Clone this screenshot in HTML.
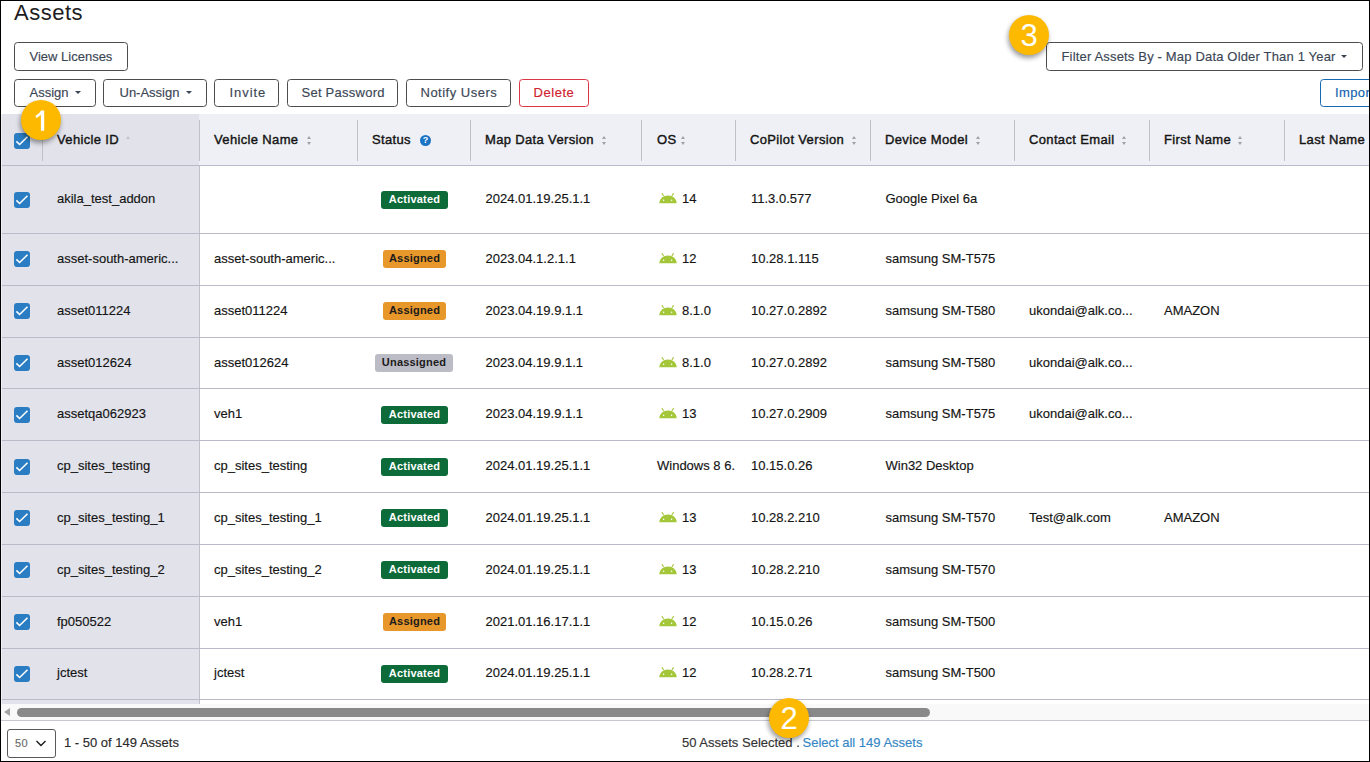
<!DOCTYPE html>
<html><head><meta charset="utf-8"><title>Assets</title><style>
*{margin:0;padding:0;box-sizing:border-box}
html,body{width:1370px;height:762px;overflow:hidden;background:#fff}
body{position:relative;font-family:"Liberation Sans", sans-serif}
.t{position:absolute;white-space:nowrap;-webkit-text-stroke:0.15px currentColor}
.btn{position:absolute;border:1px solid #4d4d4d;border-radius:3.5px;background:#fff}
.caret{position:absolute;width:0;height:0;border-left:3px solid transparent;border-right:3px solid transparent;border-top:3px solid #3b4655}
.hdr{position:absolute}
.hl{position:absolute;height:1px;background:#babac8}
.vs{position:absolute;width:1px;background:#c0c0c8}
.tri-up{position:absolute;width:0;height:0;border-left:2.5px solid transparent;border-right:2.5px solid transparent;border-bottom:3px solid #a0a0a8}
.tri-dn{position:absolute;width:0;height:0;border-left:2.5px solid transparent;border-right:2.5px solid transparent;border-top:3px solid #a0a0a8}
.help{position:absolute;width:11px;height:11px;border-radius:50%;background:#1a73c4;color:#fff;font-size:9px;line-height:11px;text-align:center;font-weight:bold}
.cb{position:absolute;width:16px;height:16px;border-radius:3px;background:#2a7dc3}
.cb svg{display:block}
.badge{position:absolute;height:18px;border-radius:3px;font-size:11px;font-weight:bold;line-height:17px;text-align:center;letter-spacing:0.2px}
.and{position:absolute}
.circ{position:absolute;width:40px;height:40px;border-radius:50%;background:#fcb900;color:#fff;font-size:31px;line-height:41px;text-align:center;box-shadow:-1px 3px 5px rgba(0,0,0,0.4)}
.frame{position:absolute;left:0;top:0;width:1370px;height:762px;border:1px solid #000;pointer-events:none}
</style></head>
<body>
<div class="t" style="left:14px;top:1.68px;font-size:22px;line-height:22px;font-weight:normal;color:#1d1d1f;letter-spacing:0.5px;-webkit-text-stroke:0">Assets</div>
<div class="btn" style="left:14px;top:42px;width:114px;height:29px;border-color:#4d4d4d;"></div><div class="t" style="left:29.5px;top:49.50px;font-size:13px;line-height:13px;font-weight:normal;color:#3b4655;letter-spacing:0px">View Licenses</div>
<div class="btn" style="left:14px;top:79px;width:82px;height:28px;border-color:#4d4d4d;"></div><div class="t" style="left:29.5px;top:86.00px;font-size:13px;line-height:13px;font-weight:normal;color:#3b4655;letter-spacing:0px">Assign</div>
<div class="caret" style="left:75px;top:91px;"></div>
<div class="btn" style="left:103px;top:79px;width:104px;height:28px;border-color:#4d4d4d;"></div><div class="t" style="left:119.5px;top:86.00px;font-size:13px;line-height:13px;font-weight:normal;color:#3b4655;letter-spacing:0px">Un-Assign</div>
<div class="caret" style="left:186px;top:91px;"></div>
<div class="btn" style="left:214px;top:79px;width:65px;height:28px;border-color:#4d4d4d;"></div><div class="t" style="left:229.5px;top:86.00px;font-size:13px;line-height:13px;font-weight:normal;color:#3b4655;letter-spacing:0.95px">Invite</div>
<div class="btn" style="left:287px;top:79px;width:111px;height:28px;border-color:#4d4d4d;"></div><div class="t" style="left:301.5px;top:86.00px;font-size:13px;line-height:13px;font-weight:normal;color:#3b4655;letter-spacing:0.25px">Set Password</div>
<div class="btn" style="left:406px;top:79px;width:105px;height:28px;border-color:#4d4d4d;"></div><div class="t" style="left:420.5px;top:86.00px;font-size:13px;line-height:13px;font-weight:normal;color:#3b4655;letter-spacing:0.5px">Notify Users</div>
<div class="btn" style="left:519px;top:79px;width:70px;height:28px;border-color:#dc3545;"></div><div class="t" style="left:533.5px;top:86.00px;font-size:13px;line-height:13px;font-weight:normal;color:#d0202e;letter-spacing:0.55px">Delete</div>
<div class="btn" style="left:1320px;top:79px;width:80px;height:28px;border-color:#1569b3;"></div><div class="t" style="left:1335px;top:86.00px;font-size:13px;line-height:13px;font-weight:normal;color:#0f62ad;letter-spacing:0.4px">Import</div>
<div class="btn" style="left:1046px;top:42px;width:317px;height:29px;border-color:#4d4d4d;"></div><div class="t" style="left:1061.5px;top:49.50px;font-size:13px;line-height:13px;font-weight:normal;color:#3b4655;letter-spacing:0.17px">Filter Assets By - Map Data Older Than 1 Year</div>
<div class="caret" style="left:1341px;top:55px;"></div>
<div class="hdr" style="left:1px;top:114px;width:1368px;height:51px;background:#eff0f5"></div>
<div class="hdr" style="left:1px;top:114px;width:198px;height:51px;background:#e1e2ea"></div>
<div class="hl" style="left:1px;top:165px;width:1368px;"></div>
<div class="vs" style="left:42px;top:120px;height:41px;"></div>
<div class="vs" style="left:199px;top:120px;height:41px;"></div>
<div class="vs" style="left:357px;top:120px;height:41px;"></div>
<div class="vs" style="left:470px;top:120px;height:41px;"></div>
<div class="vs" style="left:641px;top:120px;height:41px;"></div>
<div class="vs" style="left:735px;top:120px;height:41px;"></div>
<div class="vs" style="left:870px;top:120px;height:41px;"></div>
<div class="vs" style="left:1014px;top:120px;height:41px;"></div>
<div class="vs" style="left:1149px;top:120px;height:41px;"></div>
<div class="vs" style="left:1284px;top:120px;height:41px;"></div>
<div class="t" style="left:57px;top:132.60px;font-size:13px;line-height:13px;font-weight:normal;color:#141414;-webkit-text-stroke:0.4px #141414;letter-spacing:0.35px">Vehicle ID</div>
<div class="t" style="left:214px;top:132.60px;font-size:13px;line-height:13px;font-weight:normal;color:#141414;-webkit-text-stroke:0.4px #141414;letter-spacing:0.35px">Vehicle Name</div>
<div class="t" style="left:372px;top:132.60px;font-size:13px;line-height:13px;font-weight:normal;color:#141414;-webkit-text-stroke:0.4px #141414;letter-spacing:0.35px">Status</div>
<div class="t" style="left:485px;top:132.60px;font-size:13px;line-height:13px;font-weight:normal;color:#141414;-webkit-text-stroke:0.4px #141414;letter-spacing:0.35px">Map Data Version</div>
<div class="t" style="left:657px;top:132.60px;font-size:13px;line-height:13px;font-weight:normal;color:#141414;-webkit-text-stroke:0.4px #141414;letter-spacing:0.35px">OS</div>
<div class="t" style="left:750px;top:132.60px;font-size:13px;line-height:13px;font-weight:normal;color:#141414;-webkit-text-stroke:0.4px #141414;letter-spacing:0.35px">CoPilot Version</div>
<div class="t" style="left:885px;top:132.60px;font-size:13px;line-height:13px;font-weight:normal;color:#141414;-webkit-text-stroke:0.4px #141414;letter-spacing:0.35px">Device Model</div>
<div class="t" style="left:1029px;top:132.60px;font-size:13px;line-height:13px;font-weight:normal;color:#141414;-webkit-text-stroke:0.4px #141414;letter-spacing:0.35px">Contact Email</div>
<div class="t" style="left:1164px;top:132.60px;font-size:13px;line-height:13px;font-weight:normal;color:#141414;-webkit-text-stroke:0.4px #141414;letter-spacing:0.35px">First Name</div>
<div class="t" style="left:1299px;top:132.60px;font-size:13px;line-height:13px;font-weight:normal;color:#141414;-webkit-text-stroke:0.4px #141414;letter-spacing:0.35px">Last Name</div>
<div class="tri-up" style="border-bottom-color:#c4c4cc;left:125.5px;top:136px;"></div>
<div class="tri-up" style="left:306.5px;top:136px;"></div><div class="tri-dn" style="left:306.5px;top:142px;"></div>
<div class="tri-up" style="left:602.0px;top:136px;"></div><div class="tri-dn" style="left:602.0px;top:142px;"></div>
<div class="tri-up" style="left:680.5px;top:136px;"></div><div class="tri-dn" style="left:680.5px;top:142px;"></div>
<div class="tri-up" style="left:851.5px;top:136px;"></div><div class="tri-dn" style="left:851.5px;top:142px;"></div>
<div class="tri-up" style="left:975.5px;top:136px;"></div><div class="tri-dn" style="left:975.5px;top:142px;"></div>
<div class="tri-up" style="left:1121.5px;top:136px;"></div><div class="tri-dn" style="left:1121.5px;top:142px;"></div>
<div class="tri-up" style="left:1237.5px;top:136px;"></div><div class="tri-dn" style="left:1237.5px;top:142px;"></div>
<div class="help" style="left:420px;top:135px;">?</div>
<div class="cb" style="left:14px;top:133px;"><svg width="16" height="16" viewBox="0 0 16 16"><path d="M2.4 8.4 L5.6 11.5 L13.5 3.8" fill="none" stroke="#fff" stroke-width="1.6"/></svg></div>
<div style="position:absolute;left:1px;top:166px;width:198px;height:538px;background:#e1e2ea"></div>
<div class="vs" style="left:199px;top:166px;height:538px;"></div>
<div class="hl" style="left:1px;top:233px;width:1368px;"></div>
<div class="hl" style="left:1px;top:285px;width:1368px;"></div>
<div class="hl" style="left:1px;top:337px;width:1368px;"></div>
<div class="hl" style="left:1px;top:388px;width:1368px;"></div>
<div class="hl" style="left:1px;top:440px;width:1368px;"></div>
<div class="hl" style="left:1px;top:492px;width:1368px;"></div>
<div class="hl" style="left:1px;top:544px;width:1368px;"></div>
<div class="hl" style="left:1px;top:596px;width:1368px;"></div>
<div class="hl" style="left:1px;top:648px;width:1368px;"></div>
<div class="hl" style="left:1px;top:699px;width:1368px;"></div>
<div class="cb" style="left:14px;top:192px;"><svg width="16" height="16" viewBox="0 0 16 16"><path d="M2.4 8.4 L5.6 11.5 L13.5 3.8" fill="none" stroke="#fff" stroke-width="1.6"/></svg></div>
<div class="t" style="left:57px;top:192.00px;font-size:13px;line-height:13px;font-weight:normal;color:#141414;">akila_test_addon</div>
<div class="badge" style="left:381px;top:191px;width:67px;background:#0d6b3a;color:#ffffff">Activated</div>
<div class="t" style="left:485.5px;top:192.00px;font-size:13px;line-height:13px;font-weight:normal;color:#141414;">2024.01.19.25.1.1</div>
<svg class="and" width="19" height="11" viewBox="0 0 19 11" style="left:659px;top:192.5px"><path d="M0.3 10.3 C0.6 5.4 4.4 2.5 9 2.5 C13.6 2.5 17.4 5.4 17.7 10.3 Z" fill="#a4c639"/><path d="M2.9 0.2 L4.6 3 M14.6 0.2 L12.9 3" stroke="#a4c639" stroke-width="1.1"/><circle cx="4.6" cy="7.3" r="0.75" fill="#fff"/><circle cx="12.6" cy="7.3" r="0.75" fill="#fff"/></svg>
<div class="t" style="left:682px;top:192.00px;font-size:13px;line-height:13px;font-weight:normal;color:#141414;">14</div>
<div class="t" style="left:751px;top:192.00px;font-size:13px;line-height:13px;font-weight:normal;color:#141414;">11.3.0.577</div>
<div class="t" style="left:885.5px;top:192.00px;font-size:13px;line-height:13px;font-weight:normal;color:#141414;">Google Pixel 6a</div>
<div class="cb" style="left:14px;top:251px;"><svg width="16" height="16" viewBox="0 0 16 16"><path d="M2.4 8.4 L5.6 11.5 L13.5 3.8" fill="none" stroke="#fff" stroke-width="1.6"/></svg></div>
<div class="t" style="left:57px;top:252.00px;font-size:13px;line-height:13px;font-weight:normal;color:#141414;">asset-south-americ...</div>
<div class="t" style="left:214px;top:252.00px;font-size:13px;line-height:13px;font-weight:normal;color:#141414;">asset-south-americ...</div>
<div class="badge" style="left:383px;top:250px;width:63px;background:#e8972a;color:#1b1b1b">Assigned</div>
<div class="t" style="left:485.5px;top:252.00px;font-size:13px;line-height:13px;font-weight:normal;color:#141414;">2023.04.1.2.1.1</div>
<svg class="and" width="19" height="11" viewBox="0 0 19 11" style="left:659px;top:252.5px"><path d="M0.3 10.3 C0.6 5.4 4.4 2.5 9 2.5 C13.6 2.5 17.4 5.4 17.7 10.3 Z" fill="#a4c639"/><path d="M2.9 0.2 L4.6 3 M14.6 0.2 L12.9 3" stroke="#a4c639" stroke-width="1.1"/><circle cx="4.6" cy="7.3" r="0.75" fill="#fff"/><circle cx="12.6" cy="7.3" r="0.75" fill="#fff"/></svg>
<div class="t" style="left:682px;top:252.00px;font-size:13px;line-height:13px;font-weight:normal;color:#141414;">12</div>
<div class="t" style="left:751px;top:252.00px;font-size:13px;line-height:13px;font-weight:normal;color:#141414;">10.28.1.115</div>
<div class="t" style="left:885.5px;top:252.00px;font-size:13px;line-height:13px;font-weight:normal;color:#141414;">samsung SM-T575</div>
<div class="cb" style="left:14px;top:303px;"><svg width="16" height="16" viewBox="0 0 16 16"><path d="M2.4 8.4 L5.6 11.5 L13.5 3.8" fill="none" stroke="#fff" stroke-width="1.6"/></svg></div>
<div class="t" style="left:57px;top:304.00px;font-size:13px;line-height:13px;font-weight:normal;color:#141414;">asset011224</div>
<div class="t" style="left:214px;top:304.00px;font-size:13px;line-height:13px;font-weight:normal;color:#141414;">asset011224</div>
<div class="badge" style="left:383px;top:302px;width:63px;background:#e8972a;color:#1b1b1b">Assigned</div>
<div class="t" style="left:485.5px;top:304.00px;font-size:13px;line-height:13px;font-weight:normal;color:#141414;">2023.04.19.9.1.1</div>
<svg class="and" width="19" height="11" viewBox="0 0 19 11" style="left:659px;top:304.5px"><path d="M0.3 10.3 C0.6 5.4 4.4 2.5 9 2.5 C13.6 2.5 17.4 5.4 17.7 10.3 Z" fill="#a4c639"/><path d="M2.9 0.2 L4.6 3 M14.6 0.2 L12.9 3" stroke="#a4c639" stroke-width="1.1"/><circle cx="4.6" cy="7.3" r="0.75" fill="#fff"/><circle cx="12.6" cy="7.3" r="0.75" fill="#fff"/></svg>
<div class="t" style="left:682px;top:304.00px;font-size:13px;line-height:13px;font-weight:normal;color:#141414;">8.1.0</div>
<div class="t" style="left:751px;top:304.00px;font-size:13px;line-height:13px;font-weight:normal;color:#141414;">10.27.0.2892</div>
<div class="t" style="left:885.5px;top:304.00px;font-size:13px;line-height:13px;font-weight:normal;color:#141414;">samsung SM-T580</div>
<div class="t" style="left:1029px;top:304.00px;font-size:13px;line-height:13px;font-weight:normal;color:#141414;">ukondai@alk.co...</div>
<div class="t" style="left:1164px;top:304.00px;font-size:13px;line-height:13px;font-weight:normal;color:#141414;">AMAZON</div>
<div class="cb" style="left:14px;top:355px;"><svg width="16" height="16" viewBox="0 0 16 16"><path d="M2.4 8.4 L5.6 11.5 L13.5 3.8" fill="none" stroke="#fff" stroke-width="1.6"/></svg></div>
<div class="t" style="left:57px;top:356.00px;font-size:13px;line-height:13px;font-weight:normal;color:#141414;">asset012624</div>
<div class="t" style="left:214px;top:356.00px;font-size:13px;line-height:13px;font-weight:normal;color:#141414;">asset012624</div>
<div class="badge" style="left:375px;top:354px;width:78px;background:#bbbcc6;color:#1b1b1b">Unassigned</div>
<div class="t" style="left:485.5px;top:356.00px;font-size:13px;line-height:13px;font-weight:normal;color:#141414;">2023.04.19.9.1.1</div>
<svg class="and" width="19" height="11" viewBox="0 0 19 11" style="left:659px;top:356.5px"><path d="M0.3 10.3 C0.6 5.4 4.4 2.5 9 2.5 C13.6 2.5 17.4 5.4 17.7 10.3 Z" fill="#a4c639"/><path d="M2.9 0.2 L4.6 3 M14.6 0.2 L12.9 3" stroke="#a4c639" stroke-width="1.1"/><circle cx="4.6" cy="7.3" r="0.75" fill="#fff"/><circle cx="12.6" cy="7.3" r="0.75" fill="#fff"/></svg>
<div class="t" style="left:682px;top:356.00px;font-size:13px;line-height:13px;font-weight:normal;color:#141414;">8.1.0</div>
<div class="t" style="left:751px;top:356.00px;font-size:13px;line-height:13px;font-weight:normal;color:#141414;">10.27.0.2892</div>
<div class="t" style="left:885.5px;top:356.00px;font-size:13px;line-height:13px;font-weight:normal;color:#141414;">samsung SM-T580</div>
<div class="t" style="left:1029px;top:356.00px;font-size:13px;line-height:13px;font-weight:normal;color:#141414;">ukondai@alk.co...</div>
<div class="cb" style="left:14px;top:407px;"><svg width="16" height="16" viewBox="0 0 16 16"><path d="M2.4 8.4 L5.6 11.5 L13.5 3.8" fill="none" stroke="#fff" stroke-width="1.6"/></svg></div>
<div class="t" style="left:57px;top:407.00px;font-size:13px;line-height:13px;font-weight:normal;color:#141414;">assetqa062923</div>
<div class="t" style="left:214px;top:407.00px;font-size:13px;line-height:13px;font-weight:normal;color:#141414;">veh1</div>
<div class="badge" style="left:381px;top:406px;width:67px;background:#0d6b3a;color:#ffffff">Activated</div>
<div class="t" style="left:485.5px;top:407.00px;font-size:13px;line-height:13px;font-weight:normal;color:#141414;">2023.04.19.9.1.1</div>
<svg class="and" width="19" height="11" viewBox="0 0 19 11" style="left:659px;top:407.5px"><path d="M0.3 10.3 C0.6 5.4 4.4 2.5 9 2.5 C13.6 2.5 17.4 5.4 17.7 10.3 Z" fill="#a4c639"/><path d="M2.9 0.2 L4.6 3 M14.6 0.2 L12.9 3" stroke="#a4c639" stroke-width="1.1"/><circle cx="4.6" cy="7.3" r="0.75" fill="#fff"/><circle cx="12.6" cy="7.3" r="0.75" fill="#fff"/></svg>
<div class="t" style="left:682px;top:407.00px;font-size:13px;line-height:13px;font-weight:normal;color:#141414;">13</div>
<div class="t" style="left:751px;top:407.00px;font-size:13px;line-height:13px;font-weight:normal;color:#141414;">10.27.0.2909</div>
<div class="t" style="left:885.5px;top:407.00px;font-size:13px;line-height:13px;font-weight:normal;color:#141414;">samsung SM-T575</div>
<div class="t" style="left:1029px;top:407.00px;font-size:13px;line-height:13px;font-weight:normal;color:#141414;">ukondai@alk.co...</div>
<div class="cb" style="left:14px;top:459px;"><svg width="16" height="16" viewBox="0 0 16 16"><path d="M2.4 8.4 L5.6 11.5 L13.5 3.8" fill="none" stroke="#fff" stroke-width="1.6"/></svg></div>
<div class="t" style="left:57px;top:459.00px;font-size:13px;line-height:13px;font-weight:normal;color:#141414;">cp_sites_testing</div>
<div class="t" style="left:214px;top:459.00px;font-size:13px;line-height:13px;font-weight:normal;color:#141414;">cp_sites_testing</div>
<div class="badge" style="left:381px;top:458px;width:67px;background:#0d6b3a;color:#ffffff">Activated</div>
<div class="t" style="left:485.5px;top:459.00px;font-size:13px;line-height:13px;font-weight:normal;color:#141414;">2024.01.19.25.1.1</div>
<div class="t" style="left:657px;top:459.00px;font-size:13px;line-height:13px;font-weight:normal;color:#141414;">Windows 8 6.</div>
<div class="t" style="left:751px;top:459.00px;font-size:13px;line-height:13px;font-weight:normal;color:#141414;">10.15.0.26</div>
<div class="t" style="left:885.5px;top:459.00px;font-size:13px;line-height:13px;font-weight:normal;color:#141414;">Win32 Desktop</div>
<div class="cb" style="left:14px;top:510px;"><svg width="16" height="16" viewBox="0 0 16 16"><path d="M2.4 8.4 L5.6 11.5 L13.5 3.8" fill="none" stroke="#fff" stroke-width="1.6"/></svg></div>
<div class="t" style="left:57px;top:511.00px;font-size:13px;line-height:13px;font-weight:normal;color:#141414;">cp_sites_testing_1</div>
<div class="t" style="left:214px;top:511.00px;font-size:13px;line-height:13px;font-weight:normal;color:#141414;">cp_sites_testing_1</div>
<div class="badge" style="left:381px;top:509px;width:67px;background:#0d6b3a;color:#ffffff">Activated</div>
<div class="t" style="left:485.5px;top:511.00px;font-size:13px;line-height:13px;font-weight:normal;color:#141414;">2024.01.19.25.1.1</div>
<svg class="and" width="19" height="11" viewBox="0 0 19 11" style="left:659px;top:511.5px"><path d="M0.3 10.3 C0.6 5.4 4.4 2.5 9 2.5 C13.6 2.5 17.4 5.4 17.7 10.3 Z" fill="#a4c639"/><path d="M2.9 0.2 L4.6 3 M14.6 0.2 L12.9 3" stroke="#a4c639" stroke-width="1.1"/><circle cx="4.6" cy="7.3" r="0.75" fill="#fff"/><circle cx="12.6" cy="7.3" r="0.75" fill="#fff"/></svg>
<div class="t" style="left:682px;top:511.00px;font-size:13px;line-height:13px;font-weight:normal;color:#141414;">13</div>
<div class="t" style="left:751px;top:511.00px;font-size:13px;line-height:13px;font-weight:normal;color:#141414;">10.28.2.210</div>
<div class="t" style="left:885.5px;top:511.00px;font-size:13px;line-height:13px;font-weight:normal;color:#141414;">samsung SM-T570</div>
<div class="t" style="left:1029px;top:511.00px;font-size:13px;line-height:13px;font-weight:normal;color:#141414;">Test@alk.com</div>
<div class="t" style="left:1164px;top:511.00px;font-size:13px;line-height:13px;font-weight:normal;color:#141414;">AMAZON</div>
<div class="cb" style="left:14px;top:562px;"><svg width="16" height="16" viewBox="0 0 16 16"><path d="M2.4 8.4 L5.6 11.5 L13.5 3.8" fill="none" stroke="#fff" stroke-width="1.6"/></svg></div>
<div class="t" style="left:57px;top:563.00px;font-size:13px;line-height:13px;font-weight:normal;color:#141414;">cp_sites_testing_2</div>
<div class="t" style="left:214px;top:563.00px;font-size:13px;line-height:13px;font-weight:normal;color:#141414;">cp_sites_testing_2</div>
<div class="badge" style="left:381px;top:561px;width:67px;background:#0d6b3a;color:#ffffff">Activated</div>
<div class="t" style="left:485.5px;top:563.00px;font-size:13px;line-height:13px;font-weight:normal;color:#141414;">2024.01.19.25.1.1</div>
<svg class="and" width="19" height="11" viewBox="0 0 19 11" style="left:659px;top:563.5px"><path d="M0.3 10.3 C0.6 5.4 4.4 2.5 9 2.5 C13.6 2.5 17.4 5.4 17.7 10.3 Z" fill="#a4c639"/><path d="M2.9 0.2 L4.6 3 M14.6 0.2 L12.9 3" stroke="#a4c639" stroke-width="1.1"/><circle cx="4.6" cy="7.3" r="0.75" fill="#fff"/><circle cx="12.6" cy="7.3" r="0.75" fill="#fff"/></svg>
<div class="t" style="left:682px;top:563.00px;font-size:13px;line-height:13px;font-weight:normal;color:#141414;">13</div>
<div class="t" style="left:751px;top:563.00px;font-size:13px;line-height:13px;font-weight:normal;color:#141414;">10.28.2.210</div>
<div class="t" style="left:885.5px;top:563.00px;font-size:13px;line-height:13px;font-weight:normal;color:#141414;">samsung SM-T570</div>
<div class="cb" style="left:14px;top:614px;"><svg width="16" height="16" viewBox="0 0 16 16"><path d="M2.4 8.4 L5.6 11.5 L13.5 3.8" fill="none" stroke="#fff" stroke-width="1.6"/></svg></div>
<div class="t" style="left:57px;top:615.00px;font-size:13px;line-height:13px;font-weight:normal;color:#141414;">fp050522</div>
<div class="t" style="left:214px;top:615.00px;font-size:13px;line-height:13px;font-weight:normal;color:#141414;">veh1</div>
<div class="badge" style="left:383px;top:613px;width:63px;background:#e8972a;color:#1b1b1b">Assigned</div>
<div class="t" style="left:485.5px;top:615.00px;font-size:13px;line-height:13px;font-weight:normal;color:#141414;">2021.01.16.17.1.1</div>
<svg class="and" width="19" height="11" viewBox="0 0 19 11" style="left:659px;top:615.5px"><path d="M0.3 10.3 C0.6 5.4 4.4 2.5 9 2.5 C13.6 2.5 17.4 5.4 17.7 10.3 Z" fill="#a4c639"/><path d="M2.9 0.2 L4.6 3 M14.6 0.2 L12.9 3" stroke="#a4c639" stroke-width="1.1"/><circle cx="4.6" cy="7.3" r="0.75" fill="#fff"/><circle cx="12.6" cy="7.3" r="0.75" fill="#fff"/></svg>
<div class="t" style="left:682px;top:615.00px;font-size:13px;line-height:13px;font-weight:normal;color:#141414;">12</div>
<div class="t" style="left:751px;top:615.00px;font-size:13px;line-height:13px;font-weight:normal;color:#141414;">10.15.0.26</div>
<div class="t" style="left:885.5px;top:615.00px;font-size:13px;line-height:13px;font-weight:normal;color:#141414;">samsung SM-T500</div>
<div class="cb" style="left:14px;top:666px;"><svg width="16" height="16" viewBox="0 0 16 16"><path d="M2.4 8.4 L5.6 11.5 L13.5 3.8" fill="none" stroke="#fff" stroke-width="1.6"/></svg></div>
<div class="t" style="left:57px;top:666.00px;font-size:13px;line-height:13px;font-weight:normal;color:#141414;">jctest</div>
<div class="t" style="left:214px;top:666.00px;font-size:13px;line-height:13px;font-weight:normal;color:#141414;">jctest</div>
<div class="badge" style="left:381px;top:665px;width:67px;background:#0d6b3a;color:#ffffff">Activated</div>
<div class="t" style="left:485.5px;top:666.00px;font-size:13px;line-height:13px;font-weight:normal;color:#141414;">2024.01.19.25.1.1</div>
<svg class="and" width="19" height="11" viewBox="0 0 19 11" style="left:659px;top:666.5px"><path d="M0.3 10.3 C0.6 5.4 4.4 2.5 9 2.5 C13.6 2.5 17.4 5.4 17.7 10.3 Z" fill="#a4c639"/><path d="M2.9 0.2 L4.6 3 M14.6 0.2 L12.9 3" stroke="#a4c639" stroke-width="1.1"/><circle cx="4.6" cy="7.3" r="0.75" fill="#fff"/><circle cx="12.6" cy="7.3" r="0.75" fill="#fff"/></svg>
<div class="t" style="left:682px;top:666.00px;font-size:13px;line-height:13px;font-weight:normal;color:#141414;">12</div>
<div class="t" style="left:751px;top:666.00px;font-size:13px;line-height:13px;font-weight:normal;color:#141414;">10.28.2.71</div>
<div class="t" style="left:885.5px;top:666.00px;font-size:13px;line-height:13px;font-weight:normal;color:#141414;">samsung SM-T500</div>
<div style="position:absolute;left:1px;top:114px;width:1px;height:590px;background:#f0f0f5"></div>
<div style="position:absolute;left:1px;top:704px;width:1368px;height:16px;background:#f9f9f9"></div>
<div style="position:absolute;left:1px;top:720px;width:1368px;height:1px;background:#c8c8d0"></div>
<div style="position:absolute;left:17px;top:708px;width:913px;height:9px;border-radius:5px;background:#898989"></div>
<div style="position:absolute;left:4px;top:708px;width:0;height:0;border-top:4.5px solid transparent;border-bottom:4.5px solid transparent;border-right:6px solid #a3a3a3"></div>
<div class="btn" style="left:7px;top:729px;width:49px;height:29px;border-color:#5a5a5a;border-radius:3px"></div>
<div class="t" style="left:15px;top:737.69px;font-size:11px;line-height:11px;font-weight:normal;color:#6b6b6b;letter-spacing:0.3px">50</div>
<svg style="position:absolute;left:35px;top:739px" width="12" height="9" viewBox="0 0 12 9"><path d="M1.5 2 L6 6.5 L10.5 2" fill="none" stroke="#1b1b1b" stroke-width="1.4"/></svg>
<div class="t" style="left:64px;top:736.00px;font-size:13px;line-height:13px;font-weight:normal;color:#2b2b2b;">1 - 50 of 149 Assets</div>
<div class="t" style="left:682px;top:736.00px;font-size:13px;line-height:13px;font-weight:normal;color:#333333;white-space:pre">50 Assets Selected . </div>
<div class="t" style="left:802.5px;top:736.00px;font-size:13px;line-height:13px;font-weight:normal;color:#3587c6;">Select all 149 Assets</div>
<div class="circ" style="left:21px;top:100px;"><svg width="40" height="40" viewBox="0 0 40 40" style="display:block"><path d="M20 10.4 L23.2 10.4 L23.2 30.8 L19.9 30.8 L19.9 14.8 C18.8 15.9 17.2 17 15.3 17.9 L14.4 15.8 C16.8 14.6 18.6 12.7 20 10.4 Z" fill="#fff"/></svg></div>
<div class="circ" style="left:1009px;top:15px;">3</div>
<div class="circ" style="left:769px;top:698px;">2</div>
<div class="frame"></div>
</body></html>
